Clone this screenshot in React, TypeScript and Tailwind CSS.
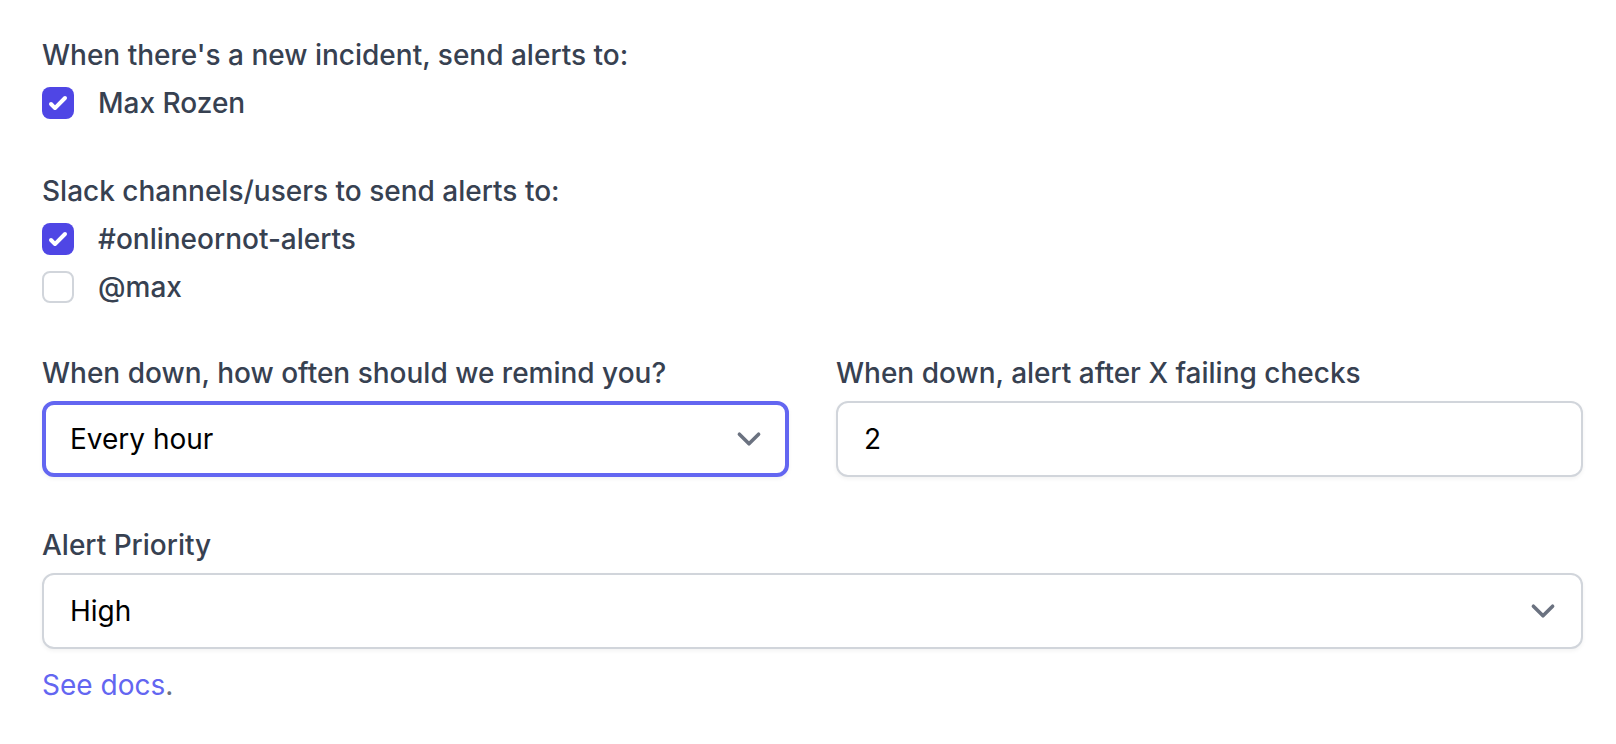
// Alert settings form, drawn at 2x scale.
import { useState } from "react";

const font = { fontFamily: "Inter, 'Noto Sans', sans-serif" };

const labelCls = "block text-[28px] leading-[40px] font-medium text-[#374151]";
const fieldBase =
  "block w-full h-[76px] rounded-[12px] bg-white pr-[80px] text-[28px] leading-[40px] text-black shadow-[0_2px_4px_rgba(0,0,0,0.05)] appearance-none outline-none";
const fieldCls = fieldBase + " border-2 border-[#d1d5db] pl-[26px]";
const focusCls = fieldBase + " border-[4px] border-[#6366f1] pl-[24px]";

function Check({ checked, label, onToggle }: { checked: boolean; label: string; onToggle: () => void }) {
  return (
    <label className="flex items-center h-[40px] cursor-pointer">
      <span
        onClick={onToggle}
        className={
          checked
            ? "flex items-center justify-center w-[32px] h-[32px] rounded-[8px] bg-[#4f46e5]"
            : "flex items-center justify-center w-[32px] h-[32px] rounded-[8px] border-2 border-[#d1d5db] bg-white"
        }
      >
        {checked && (
          <svg viewBox="0 0 16 16" className="w-[32px] h-[32px]" fill="white">
            <path d="M12.207 4.793a1 1 0 010 1.414l-5 5a1 1 0 01-1.414 0l-2-2a1 1 0 011.414-1.414L6.5 9.086l4.293-4.293a1 1 0 011.414 0z" />
          </svg>
        )}
      </span>
      <span className="ml-[24px] text-[28px] leading-[40px] font-medium text-[#374151]">{label}</span>
    </label>
  );
}

function Chevron() {
  return (
    <svg
      viewBox="0 0 20 20"
      className="pointer-events-none absolute right-[16px] top-1/2 -translate-y-1/2 w-[48px] h-[48px]"
      fill="none"
    >
      <path d="M6 8l4 4 4-4" stroke="#6b7280" strokeWidth="1.5" strokeLinecap="round" strokeLinejoin="round" />
    </svg>
  );
}

export default function App() {
  const [me, setMe] = useState(true);
  const [chan, setChan] = useState(true);
  const [max, setMax] = useState(false);

  return (
    <div className="w-[1616px] h-[744px] bg-white pt-[35px] pl-[42px] pr-[33px]" style={font}>
      <div>
        <span className={labelCls}>When there's a new incident, send alerts to:</span>
        <div className="mt-[8px]">
          <Check checked={me} label="Max Rozen" onToggle={() => setMe(!me)} />
        </div>
      </div>

      <div className="mt-[48px]">
        <span className={labelCls}>Slack channels/users to send alerts to:</span>
        <div className="mt-[8px] flex flex-col gap-[8px]">
          <Check checked={chan} label="#onlineornot-alerts" onToggle={() => setChan(!chan)} />
          <Check checked={max} label="@max" onToggle={() => setMax(!max)} />
        </div>
      </div>

      <div className="mt-[46px] grid grid-cols-2 gap-x-[47px]">
        <div>
          <label className={labelCls}>When down, how often should we remind you?</label>
          <div className="relative mt-[8px]">
            <select defaultValue="hour" className={focusCls} style={font}>
              <option value="hour">Every hour</option>
              <option value="day">Every day</option>
            </select>
            <Chevron />
          </div>
        </div>
        <div>
          <label className={labelCls}>When down, alert after X failing checks</label>
          <input type="number" defaultValue={2} className={fieldCls + " mt-[8px]"} style={font} />
        </div>
      </div>

      <div className="mt-[48px]">
        <label className={labelCls}>Alert Priority</label>
        <div className="relative mt-[8px]">
          <select defaultValue="high" className={fieldCls} style={font}>
            <option value="high">High</option>
            <option value="low">Low</option>
          </select>
          <Chevron />
        </div>
        <p className="mt-[16px] text-[28px] leading-[40px] text-[#6b7280]">
          <a href="#" className="text-[#6366f1]">See docs</a>.
        </p>
      </div>
    </div>
  );
}
